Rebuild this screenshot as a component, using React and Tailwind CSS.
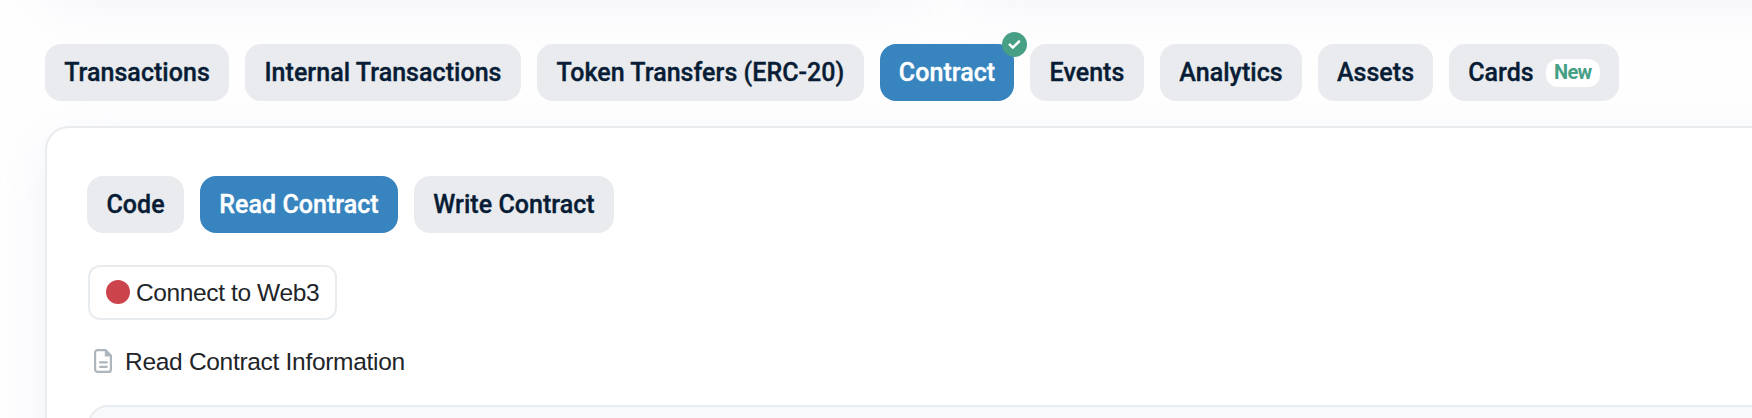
const TABS = [
  { label: "Transactions", box: "w-[184px]" },
  { label: "Internal Transactions", box: "w-[276px]" },
  { label: "Token Transfers (ERC-20)", box: "w-[327px]" },
  { label: "Contract", box: "w-[134px]", active: true, verified: true },
  { label: "Events", box: "w-[114px]" },
  { label: "Analytics", box: "w-[142px]" },
  { label: "Assets", box: "w-[115px]" },
  { label: "Cards", box: "w-[170px]", badge: "New" },
];

const SUB_TABS = [
  { label: "Code", box: "w-[97px]" },
  { label: "Read Contract", box: "w-[198px]", active: true },
  { label: "Write Contract", box: "w-[200px]" },
];

function Pill({ label, box, active, verified, badge }) {
  return (
    <button
      className={`relative flex h-[57px] shrink-0 items-center justify-center whitespace-nowrap rounded-2xl font-['Roboto',sans-serif] text-[25px] font-medium tracking-[0.04px] [-webkit-text-stroke:0.35px_currentColor] ${box} ${
        active ? "bg-[#3784be] text-white" : "bg-[#e9ebef] text-[#081d35]"
      }`}
    >
      {label}
      {badge && (
        <span className="ml-3 flex h-7 w-[54px] items-center justify-center rounded-xl bg-white pb-0.5 text-[20px] font-bold tracking-[-0.7px] text-[#46a086] [-webkit-text-stroke:0]">
          {badge}
        </span>
      )}
      {verified && (
        <svg className="absolute -right-[13px] -top-3 size-[25px]" viewBox="0 0 25 25">
          <circle cx="12.5" cy="12.5" r="12.5" fill="#479f86" />
          <path d="M7.8 12.7l3 3 6.2-6.2" fill="none" stroke="#fff" strokeWidth="2.5" strokeLinecap="round" strokeLinejoin="round" />
        </svg>
      )}
    </button>
  );
}

function FileIcon() {
  return (
    <svg className="h-6 w-[18px] shrink-0" viewBox="0 0 18 24" fill="none" stroke="#adb5bd">
      <path d="M3.6 1.1h7.9L16.9 6.5V20.4a2.5 2.5 0 0 1-2.5 2.5H3.6a2.5 2.5 0 0 1-2.5-2.5V3.6a2.5 2.5 0 0 1 2.5-2.5z" strokeWidth="2.2" strokeLinejoin="round" />
      <path d="M10.8 1v6.4H17z" fill="#adb5bd" stroke="none" />
      <path d="M6 13.4h6.8M6 17.8h6.8" strokeWidth="2.2" strokeLinecap="round" />
    </svg>
  );
}

export default function App() {
  return (
    <div className="h-[418px] w-[1752px] overflow-hidden bg-[#fefeff] font-['Liberation_Sans',Arial,sans-serif] text-[#212529]">
      <div className="-mt-[200px] ml-[45px] flex h-[192px] w-[1850px] gap-8">
        <div className="w-[885px] shrink-0 rounded-3xl bg-white shadow-[0_16px_48px_rgba(189,197,209,0.15)]" />
        <div className="w-[885px] shrink-0 rounded-3xl bg-white shadow-[0_16px_48px_rgba(189,197,209,0.15)]" />
      </div>
      <nav className="ml-[45px] mt-[52px] flex gap-4">
        {TABS.map((t) => (
          <Pill key={t.label} {...t} />
        ))}
      </nav>
      <section className="ml-[45px] mt-[25px] h-[600px] w-[1850px] rounded-3xl border-2 border-[#e9ecef] bg-white px-10 pt-12 shadow-[0_16px_48px_rgba(189,197,209,0.2)]">
        <div className="flex gap-4">
          {SUB_TABS.map((t) => (
            <Pill key={t.label} {...t} />
          ))}
        </div>
        <button className="ml-px mt-8 flex h-[55px] w-[249px] items-center whitespace-nowrap rounded-xl border-2 border-[#e9ecef] bg-white pl-[15.5px] text-[24.5px] tracking-[-0.38px]">
          <span className="mb-px mr-[6.5px] size-6 shrink-0 rounded-full bg-[#cc444b]" />
          <span className="pt-0.5">Connect to Web3</span>
        </button>
        <div className="ml-[7px] mt-[23px] flex h-9 items-center gap-[13px] whitespace-nowrap text-[24.5px] tracking-[-0.3px]">
          <FileIcon />
          <span className="pt-0.5">Read Contract Information</span>
        </div>
        <div className="ml-px mt-[26px] h-40 w-[1766px] rounded-[20px] border-2 border-[#e9ecef] bg-[#f8f9fa]" />
      </section>
    </div>
  );
}
